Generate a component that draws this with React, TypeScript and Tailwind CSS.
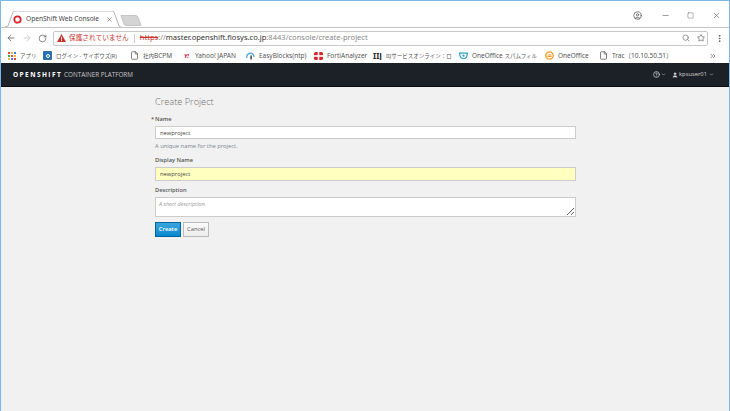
import { ArrowLeft, ArrowRight, RotateCw, Search, Star, MoreVertical, ChevronDown, ChevronsRight, File, User, Minus, Square, X, CircleUser, CircleHelp } from "lucide-react";

const uiFont = "font-['Noto_Sans','Noto_Sans_CJK_JP',sans-serif]";

function Bookmark({ icon, label, width }: { icon: React.ReactNode; label: React.ReactNode; width: string }) {
  return (
    <div className={`flex shrink-0 items-center gap-[4px] overflow-hidden ${width}`}>
      <span className="flex w-[9px] shrink-0 justify-center">{icon}</span>
      <span className="whitespace-nowrap text-[6.5px] text-[#555]">{label}</span>
    </div>
  );
}

// the Japanese labels are tighter than the latin ones in the bookmark bar
function Jp({ children }: { children: React.ReactNode }) {
  return <span className="text-[5.5px]">{children}</span>;
}

function AppsIcon() {
  const colors = ["#e8453c", "#f9bb2d", "#3f84f3", "#3aa757", "#e8453c", "#f9bb2d", "#f9bb2d", "#3f84f3", "#e8453c"];
  return (
    <span className="grid h-[8px] w-[8px] grid-cols-3 gap-[1px]">
      {colors.map((c, i) => (
        <span key={i} style={{ backgroundColor: c }} />
      ))}
    </span>
  );
}

export default function App() {
  return (
    <div className={`flex h-[411px] w-[730px] flex-col overflow-hidden border-x border-t border-[#79b8ea] bg-[#f1f1f1] ${uiFont}`}>
      {/* title bar */}
      <div className="flex h-[26px] shrink-0 items-end bg-white pl-[4px]">
        <div className="relative flex h-[16px] w-[116px] items-center pl-[8px] pr-[8px]">
          <svg className="absolute inset-0" width="116" height="16" viewBox="0 0 116 16" fill="none">
            <path d="M0 16 L3 15 L8 1 Q8.5 0 10 0 L106 0 Q108 0 109 1 L114 15 L116 16" fill="#fff" stroke="#b5b5b5" />
          </svg>
          <svg className="relative mr-[4px] shrink-0" width="9" height="9" viewBox="0 0 9 9" fill="none">
            <circle cx="4.5" cy="4.5" r="3.2" stroke="#d9242c" strokeWidth="1.8" />
          </svg>
          <span className="relative whitespace-nowrap text-[6.6px] text-[#444]">OpenShift Web Console</span>
          <X className="relative ml-auto text-[#555]" size={7} strokeWidth={2} />
        </div>
        <svg className="mb-[1px] ml-[-1px]" width="22" height="11" viewBox="0 0 22 11" fill="none">
          <path d="M1 0.5 L15 0.5 Q17 0.5 18 2 L21 10.5 L6 10.5 Q5 10.5 4 9 Z" fill="#d4d4d4" stroke="#c4c4c4" />
        </svg>
        <div className="mb-[7px] ml-auto flex items-center text-[#555]">
          <CircleUser size={9} strokeWidth={2} />
          <Minus className="ml-[19px]" size={9} strokeWidth={1.5} />
          <Square className="ml-[17px]" size={7} strokeWidth={1.5} />
          <X className="ml-[18px] mr-[8px]" size={9} strokeWidth={1.5} />
        </div>
      </div>

      {/* toolbar */}
      <div className="flex h-[21px] shrink-0 items-center border-t border-[#c4c4c4] bg-white pl-[5px] pr-[5px]">
        <ArrowLeft className="text-[#666]" size={10} strokeWidth={2} />
        <ArrowRight className="ml-[6px] text-[#c8c8c8]" size={10} strokeWidth={2} />
        <RotateCw className="ml-[6px] text-[#666]" size={9} strokeWidth={2} />
        <div className="ml-[6px] flex h-[15px] flex-1 items-center rounded-[2px] border border-[#c8c8c8] bg-white pl-[3px] pr-[2px]">
          <svg className="shrink-0" width="9" height="8" viewBox="0 0 9 8">
            <path d="M4.5 0 L9 8 L0 8 Z" fill="#c5352b" />
            <rect x="4" y="2.8" width="1" height="2.8" fill="#fff" />
            <rect x="4" y="6.2" width="1" height="1" fill="#fff" />
          </svg>
          <span className="ml-[3px] whitespace-nowrap text-[6.7px] text-[#c5352b]">保護されていません</span>
          <span className="mx-[5px] h-[9px] w-px bg-[#ccc]" />
          <span className="whitespace-nowrap text-[7.55px] text-[#888]">
            <span className="text-[#c5352b] line-through">https</span>://
            <span className="text-[#333]">master.openshift.fiosys.co.jp</span>:8443/console/create-project
          </span>
          <Search className="ml-auto text-[#666]" size={8} strokeWidth={2} />
          <Star className="ml-[7px] text-[#555]" size={8} strokeWidth={2} />
        </div>
        <MoreVertical className="ml-[7px] text-[#555]" size={9} strokeWidth={2.5} />
      </div>

      {/* bookmarks */}
      <div className="flex h-[15px] shrink-0 items-center bg-white pl-[6px]">
        <Bookmark width="w-[36px]" icon={<AppsIcon />} label={<Jp>アプリ</Jp>} />
        <Bookmark
          width="w-[87px]"
          icon={
            <span className="flex h-[9px] w-[9px] items-center justify-center rounded-[1px] bg-[#2a6fb0]">
              <span className="h-[4px] w-[4px] rounded-full border border-white" />
            </span>
          }
          label={<Jp>ログイン - サイボウズ(R)</Jp>}
        />
        <Bookmark width="w-[52px]" icon={<File className="text-[#555]" size={9} />} label={<><Jp>社内</Jp>BCPM</>} />
        <Bookmark
          width="w-[64px]"
          icon={<span className="text-[6px] font-bold italic leading-none text-[#d0213b]">Y!</span>}
          label="Yahoo! JAPAN"
        />
        <Bookmark
          width="w-[68px]"
          icon={
            <svg width="9" height="9" viewBox="0 0 9 9" fill="none">
              <path d="M1 7 A3.6 3.6 0 1 1 8 6" stroke="#4aa3df" strokeWidth="1.3" />
              <rect x="4.4" y="4.5" width="1.4" height="4" fill="#333" />
            </svg>
          }
          label="EasyBlocks(ntp)"
        />
        <Bookmark
          width="w-[59px]"
          icon={
            <svg width="9" height="8" viewBox="0 0 9 8">
              <rect width="9" height="8" rx="1.5" fill="#d9242c" />
              <rect x="3.7" width="1.6" height="8" fill="#fff" />
              <rect y="3.2" width="9" height="1.6" fill="#fff" />
            </svg>
          }
          label="FortiAnalyzer"
        />
        <Bookmark width="w-[86px]" icon={<span className="text-[8px] font-bold leading-none text-[#222]">IIJ</span>} label={<Jp>IIJサービスオンライン：ロ</Jp>} />
        <Bookmark
          width="w-[86px]"
          icon={
            <svg width="10" height="8" viewBox="0 0 10 8" fill="none">
              <path d="M0.5 0.8 L9.5 0.8 L8.5 5 Q7 7.5 4.5 7 Q2 6.5 1.2 4 Z" stroke="#2b9fc4" strokeWidth="1.3" />
              <circle cx="5" cy="3.6" r="1.2" fill="#2b9fc4" />
            </svg>
          }
          label={<>OneOffice <Jp>スパムフィル</Jp></>}
        />
        <Bookmark
          width="w-[54px]"
          icon={
            <svg width="9" height="9" viewBox="0 0 9 9" fill="none">
              <circle cx="4.5" cy="4.5" r="3.7" stroke="#ef9a1c" strokeWidth="1.3" />
              <path d="M2.5 4 H6.5 M2.5 5.5 H6.5" stroke="#ef9a1c" />
            </svg>
          }
          label="OneOffice"
        />
        <Bookmark width="w-[80px]" icon={<File className="text-[#555]" size={9} />} label="Trac（10.10.50.51）" />
        <ChevronsRight className="ml-auto mr-[12px] text-[#555]" size={8} strokeWidth={2} />
      </div>

      {/* app nav */}
      <nav className="flex h-[24px] shrink-0 items-center border-b border-[#0b0c0e] bg-[#1c2027] pl-[12px] pr-[15px] font-['Open_Sans',sans-serif] text-[#d5d5d5]">
        <span className="text-[6.5px] font-bold tracking-[0.22em] text-white">OPENSHIFT</span>
        <span className="ml-[2px] text-[6.3px] text-[#c8c8c8]">CONTAINER PLATFORM</span>
        <CircleHelp className="ml-auto" size={7} strokeWidth={2.5} />
        <ChevronDown className="ml-[1px]" size={5} strokeWidth={2.5} />
        <User className="ml-[6px]" size={6} fill="currentColor" />
        <span className="ml-[1px] text-[5.8px]">kpsuser01</span>
        <ChevronDown className="ml-[2px]" size={5} strokeWidth={2.5} />
      </nav>

      {/* form */}
      <main className="ml-[154px] w-[421px] font-['Open_Sans',sans-serif] text-[#555]">
        <h1 className="mt-[8px] text-[9.2px] font-light leading-[14px] text-[#707070]">Create Project</h1>
        <label className="relative mt-[6px] block text-[5.7px] font-semibold leading-[9px]">
          <span className="absolute left-[-4px] top-0 text-[#555]">*</span>Name
        </label>
        <input
          readOnly
          value="newproject"
          className="mt-[2px] block h-[13px] w-full border border-[#ccc] bg-white px-[4px] text-[5.8px] text-[#444] outline-none"
        />
        <p className="mt-[3px] text-[5.8px] leading-[9px] text-[#80848a]">A unique name for the project.</p>
        <label className="mt-[5px] block text-[5.7px] font-semibold leading-[9px]">Display Name</label>
        <input
          readOnly
          value="newproject"
          className="mt-[2px] block h-[14px] w-full border border-[#ccc] bg-[#ffffc0] px-[4px] text-[5.8px] text-[#444] outline-none"
        />
        <label className="mt-[5px] block text-[5.7px] font-semibold leading-[9px]">Description</label>
        <textarea
          readOnly
          placeholder="A short description."
          className="mt-[2px] block h-[20px] w-full border border-[#ccc] bg-white px-[3px] py-[2px] text-[5.5px] italic leading-[8px] text-[#363636] outline-none placeholder:text-[#999]"
        />
        <div className="mt-[5px] flex gap-[2px]">
          <button className="h-[15px] w-[26px] border border-[#00659c] bg-gradient-to-b from-[#39a5dc] to-[#0088ce] text-[5.8px] font-semibold text-white">
            Create
          </button>
          <button className="h-[15px] w-[26px] border border-[#bbb] bg-gradient-to-b from-[#fafafa] to-[#ededed] text-[5.8px] text-[#555]">
            Cancel
          </button>
        </div>
      </main>
    </div>
  );
}
